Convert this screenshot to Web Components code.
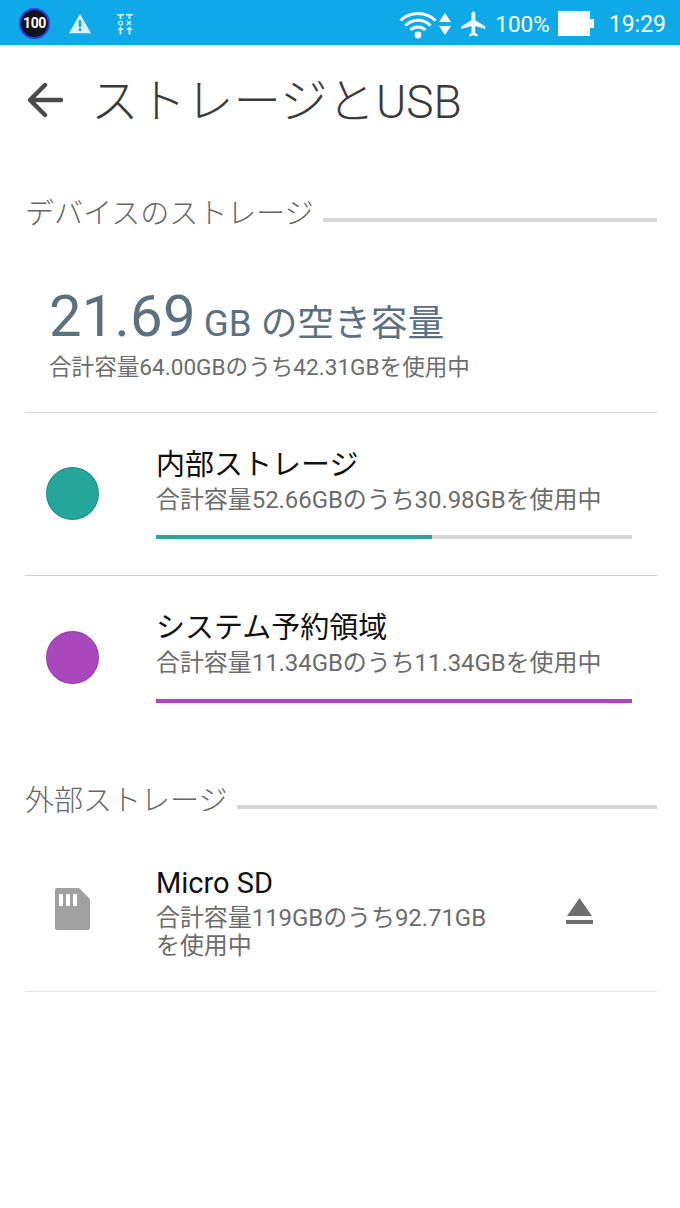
<!DOCTYPE html>
<html lang="ja">
<head>
<meta charset="utf-8">
<title>ストレージとUSB</title>
<style>
  html, body { margin: 0; padding: 0; background: #fff; }
  body { width: 680px; height: 1208px; overflow: hidden; font-family: Roboto, "Noto Sans CJK JP", sans-serif; }
</style>
</head>
<body>
<status-bar></status-bar>
<title-bar>ストレージと<span slot="latin">USB</span></title-bar>

<section-head style="--top:42px">デバイスのストレージ</section-head>
<free-summary amount="21.69" unit="GB の空き容量" note="合計容量64.00GBのうち42.31GBを使用中"></free-summary>
<storage-row color="#26a69a" used="58" name="内部ストレージ" note="合計容量52.66GBのうち30.98GBを使用中"></storage-row>
<storage-row color="#ab47bc" used="100" name="システム予約領域" note="合計容量11.34GBのうち11.34GBを使用中" last></storage-row>

<section-head style="--top:45px">外部ストレージ</section-head>
<sd-row name="Micro SD" note="合計容量119GBのうち92.71GBを使用中"></sd-row>

<script>
class StatusBar extends HTMLElement {
  constructor() {
    super();
    this.attachShadow({ mode: 'open' }).innerHTML = `
      <style>
        :host { display: flex; align-items: center; height: 43px; padding-top: 2px; background: #0fa9e8; color: #fff; border-bottom: 1px solid #e8f6fc; }
        svg { display: block; flex: none; }
        .badge { margin-left: 19px; width: 31px; height: 31px; border-radius: 50%; box-sizing: border-box; background: #141420; border: 2px solid #2b3fe0; color: #fff; font: 700 14px/27px Roboto, sans-serif; text-align: center; letter-spacing: -.4px; }
        .warn { margin-left: 18px; }
        .tune { margin-left: 25px; }
        .space { flex: 1; }
        .pct { font: 400 22.500px Roboto, sans-serif; margin: 1px 0 0 6px; }
        .clock { font: 400 23px Roboto, sans-serif; margin: 1px 14px 0 14px; }
        .wifi { margin-right: 1px; }
        .air { margin-left: 8px; }
        .batt { margin-left: 8px; }
        .arrows { margin-left: 1px; }
      </style>
      <div class="badge">100</div>
      <svg class="warn" width="24" height="21" viewBox="0 0 26 24" preserveAspectRatio="none"><path fill="#d6f1fc" fill-rule="evenodd" d="M13 1 25 23H1ZM11.700 8v8h2.600V8ZM11.700 17.500v3h2.600v-3Z"/></svg>
      <svg class="tune" width="16" height="22" viewBox="0 0 16 22" fill="#d6f1fc"><path d="M0 1h7v1.600H4.400V6H2.600V2.600H0ZM9 1h7v1.600h-2.600V6h-1.800V2.600H9Z"/><circle cx="3.500" cy="10" r="2" fill="none" stroke="#d6f1fc" stroke-width="1.200"/><path d="M10 8l4 4M14 8l-4 4" stroke="#d6f1fc" stroke-width="1.300"/><path d="M3.500 13.500 7 17H4.400v4.500H2.600V17H0ZM12.500 13.500 16 17h-2.600v4.500h-1.800V17H9Z"/></svg>
      <div class="space"></div>
      <svg class="wifi" width="38" height="30" viewBox="0 0 38 30" fill="none" stroke="#fff" stroke-width="3"><path d="M1.500 11.500C11 2 27 2 36.500 11.500"/><path d="M6.500 16.500C13.500 9.500 24.500 9.500 31.500 16.500"/><path d="M11.500 21C16 17 22 17 26.500 21"/><circle cx="19" cy="26" r="3.400" fill="#fff" stroke="none"/></svg>
      <svg class="arrows" width="12" height="26" viewBox="0 0 12 26" fill="#fff"><path d="M6 2 12 11H0ZM0 15H12L6 24Z"/></svg>
      <svg class="air" width="30" height="30" viewBox="0 0 24 24" fill="#fff"><path d="M21 16v-2l-8-5V3.500a1.500 1.500 0 0 0-3 0V9l-8 5v2l8-2.500V19l-2 1.500V22l3.500-1 3.500 1v-1.500L13 19v-5.500Z"/></svg>
      <span class="pct">100%</span>
      <svg class="batt" width="37" height="25" viewBox="0 0 37 25" fill="#fff"><path d="M0 0h32v8h4v9h-4v8H0Z"/></svg>
      <span class="clock">19:29</span>`;
  }
}
customElements.define('status-bar', StatusBar);

class TitleBar extends HTMLElement {
  constructor() {
    super();
    this.attachShadow({ mode: 'open' }).innerHTML = `
      <style>
        :host { display: flex; align-items: center; height: 108px; padding-left: 27px; color: #3a3a3a; }
        svg { flex: none; margin-right: 27px; }
        .t { font: 300 47.500px/1 "Noto Sans CJK JP", sans-serif; white-space: nowrap; margin-top: -2px; }
        ::slotted([slot=latin]) { font: 300 46px/1 Roboto, sans-serif; margin-left: 1px; }
      </style>
      <svg width="37" height="36" viewBox="0 0 37 36" fill="none" stroke="#4a4a4a" stroke-width="4.400" stroke-linecap="round" stroke-linejoin="round"><path d="M34 18H4M18 3 3 18l15 15"/></svg>
      <span class="t"><slot></slot><slot name="latin"></slot></span>`;
  }
}
customElements.define('title-bar', TitleBar);

class SectionHead extends HTMLElement {
  constructor() {
    super();
    this.attachShadow({ mode: 'open' }).innerHTML = `
      <style>
        :host { display: flex; align-items: center; margin: var(--top, 40px) 23px 0 25px; height: 40px; color: #666; }
        .t { font: 300 29px/40px "Noto Sans CJK JP", sans-serif; white-space: nowrap; margin-bottom: 10px; }
        .rule { flex: 1; height: 4px; background: #d6d6d6; margin: 8px 0 0 9.500px; }
      </style>
      <span class="t"><slot></slot></span><span class="rule"></span>`;
  }
}
customElements.define('section-head', SectionHead);

class FreeSummary extends HTMLElement {
  constructor() {
    super();
    this.attachShadow({ mode: 'open' }).innerHTML = `
      <style>
        :host { display: block; margin: 0 23px 0 25px; padding: 45px 0 29px 24px; border-bottom: 1px solid #d8d8d8; }
        .big { display: flex; align-items: baseline; height: 70px; color: #5b7180; white-space: nowrap; }
        .n { font: 400 58px/70px Roboto, sans-serif; letter-spacing: .2px; }
        .u { font: 400 36.700px/70px Roboto, "Noto Sans CJK JP", sans-serif; margin-left: 8px; }
        .note { font: 400 22.600px/30px Roboto, "Noto Sans CJK JP", sans-serif; color: #6c6c6c; margin-top: 2px; white-space: nowrap; }
      </style>
      <div class="big"><span class="n"></span><span class="u"></span></div>
      <div class="note"></div>`;
    const r = this.shadowRoot;
    r.querySelector('.n').textContent = this.getAttribute('amount');
    r.querySelector('.u').textContent = this.getAttribute('unit');
    r.querySelector('.note').textContent = this.getAttribute('note');
  }
}
customElements.define('free-summary', FreeSummary);

class StorageRow extends HTMLElement {
  constructor() {
    super();
    this.attachShadow({ mode: 'open' }).innerHTML = `
      <style>
        :host { display: flex; margin: 0 23px 0 25px; height: 162px; border-bottom: 1px solid #d0d0d0; }
        :host([last]) { border-bottom: 0; }
        .dot { flex: none; width: 53px; height: 53px; box-sizing: border-box; border-radius: 50%; margin: 54px 0 0 21px; border: 1px solid rgba(0,0,0,.15); }
        :host([last]) .dot { margin-top: 55px; }
        .body { flex: 1; margin: 29px 25px 0 57px; }
        .name { font: 400 29px/40px "Noto Sans CJK JP", sans-serif; color: #111; white-space: nowrap; }
        .note { font: 400 24px/32px Roboto, "Noto Sans CJK JP", sans-serif; color: #6c6c6c; white-space: nowrap; margin-top: 2px; letter-spacing: -.07px; }
        .bar { height: 4px; background: #d6d6d6; margin-top: 19px; }
        :host([last]) .bar { margin-top: 20px; }
        .fill { height: 100%; }
      </style>
      <div class="dot"></div>
      <div class="body"><div class="name"></div><div class="note"></div><div class="bar"><div class="fill"></div></div></div>`;
    const r = this.shadowRoot, c = this.getAttribute('color');
    r.querySelector('.dot').style.background = c;
    r.querySelector('.name').textContent = this.getAttribute('name');
    r.querySelector('.note').textContent = this.getAttribute('note');
    const fill = r.querySelector('.fill');
    fill.style.background = c;
    fill.style.width = this.getAttribute('used') + '%';
  }
}
customElements.define('storage-row', StorageRow);

class SdRow extends HTMLElement {
  constructor() {
    super();
    this.attachShadow({ mode: 'open' }).innerHTML = `
      <style>
        :host { display: flex; margin: 0 23px 0 25px; height: 169px; border-bottom: 1px solid #e4e4e4; box-sizing: border-box; }
        .sd { flex: none; margin: 65px 0 0 30px; }
        .body { width: 340px; margin: 40px 0 0 66px; }
        .name { font: 400 29px/40px Roboto, sans-serif; color: #111; }
        .note { font: 400 24px/28px Roboto, "Noto Sans CJK JP", sans-serif; color: #6c6c6c; margin-top: 1px; letter-spacing: -.07px; }
        .ej { flex: none; margin: 75px 0 0 70px; }
      </style>
      <svg class="sd" width="35" height="42" viewBox="0 0 35 42"><path fill="#a0a0a0" fill-rule="evenodd" d="M2 0H24L35 11V40a2 2 0 0 1-2 2H2a2 2 0 0 1-2-2V2A2 2 0 0 1 2 0ZM4 6v12h4V6ZM11 6v12h4V6ZM18 6v12h4V6Z"/></svg>
      <div class="body"><div class="name"></div><div class="note"></div></div>
      <svg class="ej" width="27" height="27" viewBox="0 0 27 27" fill="#6e6e6e"><path d="M13.500 0 26 18H1ZM0 22h27v4H0Z"/></svg>`;
    const r = this.shadowRoot;
    r.querySelector('.name').textContent = this.getAttribute('name');
    r.querySelector('.note').textContent = this.getAttribute('note');
  }
}
customElements.define('sd-row', SdRow);
</script>
</body>
</html>
